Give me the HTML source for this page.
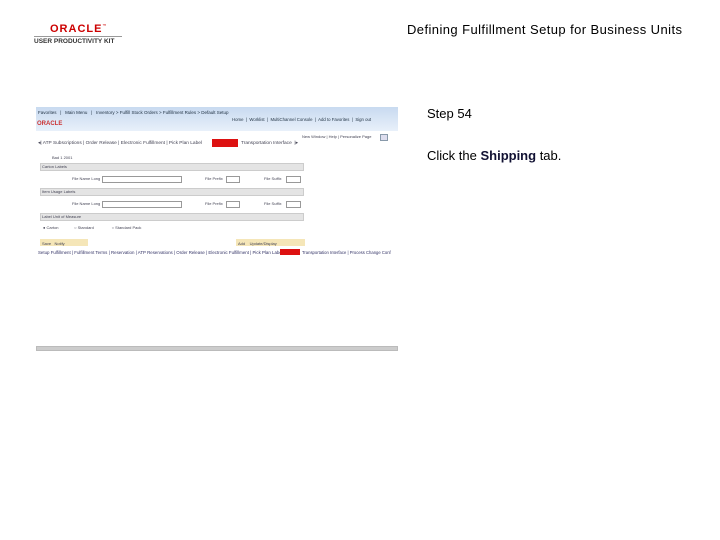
<!DOCTYPE html><html><head><style>
body{margin:0;width:720px;height:540px;background:#fff;position:relative;font-family:"Liberation Sans",sans-serif;overflow:hidden}
.a{position:absolute}
.t{font-size:4px;color:#445;white-space:nowrap}
.bar{background:#e4e4e4;border:1px solid #ccc;height:6px}
.in{background:#fff;border:1px solid #999;height:5px}
</style></head><body>
<div class="a" style="left:50px;top:23px;color:#c00;font-size:11px;font-weight:bold;letter-spacing:1px">ORACLE<span style="font-size:4px;vertical-align:top">™</span></div>
<div class="a" style="left:34px;top:36px;width:88px;border-top:1px solid #999"></div>
<div class="a" style="left:34px;top:38px;font-size:6.5px;font-weight:bold;color:#333">USER PRODUCTIVITY KIT</div>
<div class="a" style="left:407px;top:22px;font-size:13px;color:#000;letter-spacing:0.42px">Defining Fulfillment Setup for Business Units</div>
<div class="a" style="left:427px;top:106px;font-size:13px">Step 54</div>
<div class="a" style="left:427px;top:148px;font-size:13px">Click the <b style="color:#113">Shipping</b> tab.</div>

<div class="a" style="left:36px;top:107px;width:362px;height:24px;background:linear-gradient(#c8daf0,#e8f0fa)"></div>
<div class="a t" style="left:38px;top:110px;color:#234;font-size:4.5px">Favorites &nbsp; | &nbsp; Main Menu &nbsp; | &nbsp; Inventory &gt; Fulfill Stock Orders &gt; Fulfillment Rules &gt; Default Setup</div>
<div class="a t" style="left:232px;top:117px;color:#234;font-size:4.3px">Home &nbsp;|&nbsp; Worklist &nbsp;|&nbsp; MultiChannel Console &nbsp;|&nbsp; Add to Favorites &nbsp;|&nbsp; Sign out</div>
<div class="a" style="left:37px;top:121px;color:#c33;font-size:6px;font-weight:bold">ORACLE</div>
<div class="a t" style="left:302px;top:134px">New Window | Help | Personalize Page</div>
<div class="a" style="left:380px;top:134px;width:6px;height:5px;border:1px solid #89a;background:#dde"></div>
<div class="a t" style="left:38px;top:141px;font-size:4.8px">◂| ATP Subscriptions | Order Release | Electronic Fulfillment | Pick Plan Label</div>
<div class="a" style="left:212px;top:139px;width:26px;height:8px;background:#d11"></div>
<div class="a t" style="left:241px;top:141px;font-size:4.8px">Transportation Interface &nbsp;|▸</div>
<div class="a t" style="left:52px;top:155px">Bad 1 2001</div>

<div class="a bar" style="left:40px;top:163px;width:262px"></div><div class="a t" style="left:42px;top:164px">Carton Labels</div>
<div class="a t" style="left:72px;top:176px">File Name Long</div><div class="a in" style="left:102px;top:176px;width:78px"></div>
<div class="a t" style="left:205px;top:176px">File Prefix</div><div class="a in" style="left:226px;top:176px;width:12px"></div>
<div class="a t" style="left:264px;top:176px">File Suffix</div><div class="a in" style="left:286px;top:176px;width:13px"></div>

<div class="a bar" style="left:40px;top:188px;width:262px"></div><div class="a t" style="left:42px;top:189px">Item Usage Labels</div>
<div class="a t" style="left:72px;top:201px">File Name Long</div><div class="a in" style="left:102px;top:201px;width:78px"></div>
<div class="a t" style="left:205px;top:201px">File Prefix</div><div class="a in" style="left:226px;top:201px;width:12px"></div>
<div class="a t" style="left:264px;top:201px">File Suffix</div><div class="a in" style="left:286px;top:201px;width:13px"></div>

<div class="a bar" style="left:40px;top:213px;width:262px"></div><div class="a t" style="left:42px;top:214px">Label Unit of Measure</div>
<div class="a t" style="left:43px;top:225px">● Carton &nbsp;&nbsp;&nbsp;&nbsp;&nbsp;&nbsp;&nbsp;&nbsp;&nbsp;&nbsp;&nbsp;&nbsp; ○ Standard &nbsp;&nbsp;&nbsp;&nbsp;&nbsp;&nbsp;&nbsp;&nbsp;&nbsp;&nbsp;&nbsp;&nbsp;&nbsp;&nbsp; ○ Standard Pack</div>

<div class="a" style="left:40px;top:239px;width:48px;height:7px;background:#f5e6b8"></div><div class="a t" style="left:42px;top:241px">Save &nbsp; Notify</div>
<div class="a" style="left:236px;top:239px;width:69px;height:7px;background:#f5e6b8"></div><div class="a t" style="left:238px;top:241px">Add &nbsp;&nbsp; Update/Display</div>
<div class="a t" style="left:38px;top:250px;color:#336;font-size:4.4px">Setup Fulfillment | Fulfillment Terms | Reservation | ATP Reservations | Order Release | Electronic Fulfillment | Pick Plan Label</div>
<div class="a" style="left:280px;top:249px;width:20px;height:6px;background:#d11"></div>
<div class="a t" style="left:302px;top:250px;color:#336;font-size:4.2px">Transportation Interface | Process Change Conf</div>

<div class="a" style="left:36px;top:346px;width:362px;height:5px;background:#ccc;border:1px solid #bbb;box-sizing:border-box"></div>
</body></html>
